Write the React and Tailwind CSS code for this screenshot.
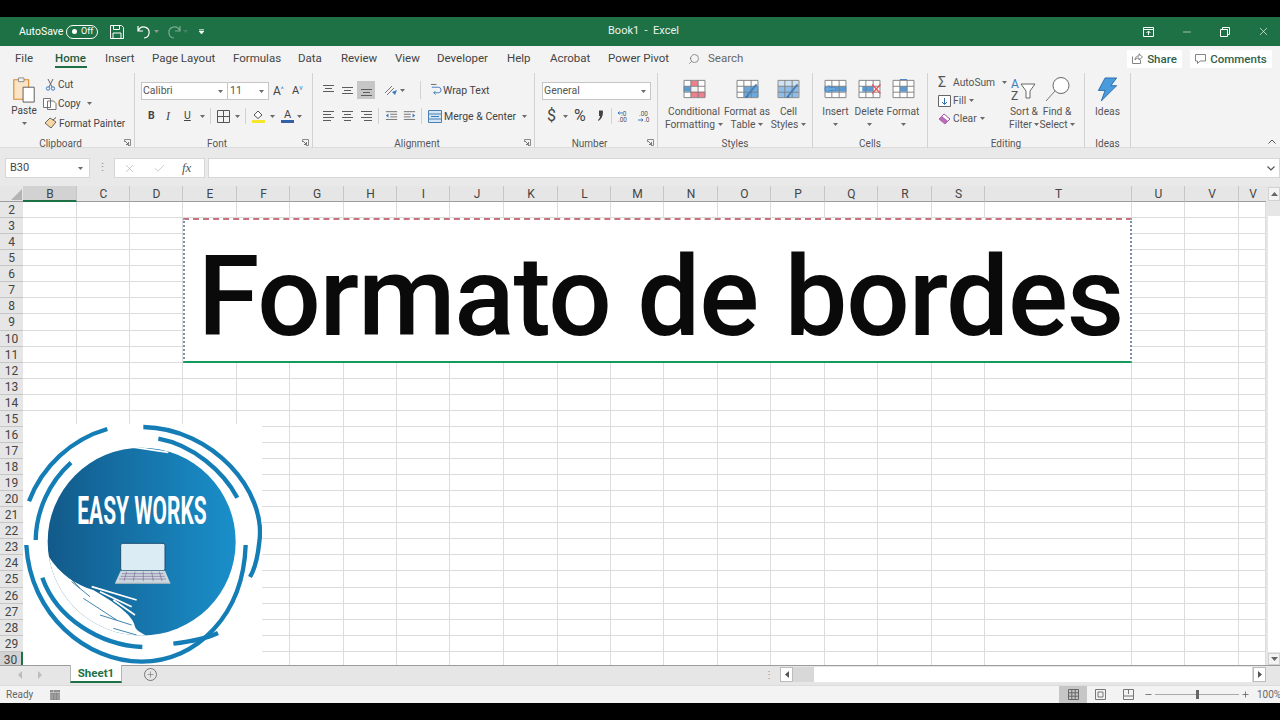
import React from "react";
import { Search, Minus, Plus, X, Check } from "lucide-react";

const FONT = "font-['Roboto',sans-serif]";

const TABS = [
  { label: "File", w: "w-[40px]" },
  { label: "Home", w: "w-[50px]", active: true },
  { label: "Insert", w: "w-[47px]" },
  { label: "Page Layout", w: "w-[81px]" },
  { label: "Formulas", w: "w-[65px]" },
  { label: "Data", w: "w-[43px]" },
  { label: "Review", w: "w-[54px]" },
  { label: "View", w: "w-[42px]" },
  { label: "Developer", w: "w-[70px]" },
  { label: "Help", w: "w-[43px]" },
  { label: "Acrobat", w: "w-[58px]" },
  { label: "Power Pivot", w: "w-[80px]" },
];

const COLUMNS = ["B", "C", "D", "E", "F", "G", "H", "I", "J", "K", "L", "M", "N", "O", "P", "Q", "R", "S", "T", "U", "V", "V"];

const ROWS = Array.from({ length: 29 }, (_, i) => i + 2);

function Caret({ className = "" }) {
  return (
    <svg width="5" height="3" viewBox="0 0 5 3" className={`shrink-0 ${className}`}>
      <path d="M0 0h5L2.500 3z" fill="#6a6a6a" />
    </svg>
  );
}

function Launcher() {
  return (
    <svg width="7" height="7" viewBox="0 0 7 7" className="absolute right-[3px] bottom-[2px]">
      <path d="M.5 3V.5H6.500V6.500H4" fill="none" stroke="#8a8a8a" />
      <path d="M1 2l3.500 3.500M2 5.500h2.500V3" fill="none" stroke="#777" />
    </svg>
  );
}

function Lines({ rows, active }) {
  return (
    <div className={`w-[18px] h-[18px] flex items-center justify-center ${active ? "bg-[#c6c6c6]" : ""}`}>
      <svg width="13" height="14" viewBox="0 0 13 14">
        {rows.map(([x1, x2, y], i) => (
          <path key={i} d={`M${x1} ${y + 0.5}H${x2}`} stroke="#5c5c5c" />
        ))}
      </svg>
    </div>
  );
}

function GridCell({ fills = [], children }) {
  return (
    <svg width="25" height="20" viewBox="0 0 26 22">
      <rect x="1.500" y="1.500" width="23" height="19" fill="#fff" />
      {fills.map(([x, y, w, h, c], i) => <rect key={i} x={x} y={y} width={w} height={h} fill={c} />)}
      <path d="M1.500 1.500h23v19h-23zM9 1.500v19M17 1.500v19M1.500 8h23M1.500 14.500h23" fill="none" stroke="#7c7c7c" />
      {children}
    </svg>
  );
}

function BigButton({ icon, lines, w }) {
  return (
    <div className={`${w} flex flex-col items-center leading-[13px] text-center`}>
      <div className="h-[22px] flex items-center justify-center">{icon}</div>
      <div className="mt-[5px] whitespace-nowrap">{lines[0]}</div>
      <div className="h-[13px] flex items-center justify-center gap-[3px] whitespace-nowrap">
        {lines[1]}
        <Caret />
      </div>
    </div>
  );
}

function Group({ label, w, launcher, children }) {
  return (
    <div className={`${w} relative h-[75px] shrink-0 flex flex-col border-r border-[#d2d2d2]`}>
      <div className="h-[64px]">{children}</div>
      <div className={`h-[11px] leading-[13px] text-center text-[10px] text-[#555] ${launcher ? "pr-[13px]" : ""}`}>{label}</div>
      {launcher && <Launcher />}
    </div>
  );
}

function TitleBar() {
  return (
    <div className="h-[29px] bg-[#1e7145] flex items-center text-white text-[11px] relative">
      <span className="ml-[19px] w-[47px] text-[10.500px]">AutoSave</span>
      <div className="w-[32px] h-[14px] rounded-full border border-white flex items-center pl-[5px] gap-[4px] text-[9px]">
        <span className="w-[5px] h-[5px] rounded-full bg-white" />
        <span>Off</span>
      </div>
      <svg width="14" height="14" viewBox="0 0 14 14" className="ml-[12px]">
        <path d="M.5.500h11l2 2v11H.5z M3.500.500v4h6v-4 M3 13.500V8h8v5.500" fill="none" stroke="#fff" />
      </svg>
      <svg width="15" height="14" viewBox="0 0 15 14" className="ml-[13px]">
        <path d="M1 1v5h5 M1.500 5.500A5.500 5.500 0 1 1 7 13" fill="none" stroke="#fff" strokeWidth="1.200" />
      </svg>
      <Caret className="ml-[2px] invert" />
      <svg width="15" height="14" viewBox="0 0 15 14" className="ml-[7px] opacity-40">
        <path d="M14 1v5H9 M13.500 5.500A5.500 5.500 0 1 0 8 13" fill="none" stroke="#fff" strokeWidth="1.200" />
      </svg>
      <Caret className="ml-[2px] invert opacity-40" />
      <svg width="5" height="5" viewBox="0 0 5 5" className="ml-[11px]">
        <path d="M0 .5h5M0 2h5L2.500 5z" stroke="#fff" strokeWidth=".6" fill="#fff" />
      </svg>
      <span className="absolute left-[608px] text-[#eaf3ee]">Book1&nbsp; -&nbsp; Excel</span>
      <div className="ml-auto flex items-center text-white">
        <svg width="11" height="10" viewBox="0 0 11 10">
          <path d="M.5.500h10v9H.5zM.5 2.500h10M5.500 8V4M3.500 6l2-2 2 2" fill="none" stroke="#fff" />
        </svg>
        <Minus size={12} strokeWidth={1.200} className="ml-[27px]" />
        <svg width="10" height="10" viewBox="0 0 10 10" className="ml-[27px]">
          <path d="M.5 2.500h7v7h-7zM2.500 2.500v-2h7v7h-2" fill="none" stroke="#fff" />
        </svg>
        <X size={13} strokeWidth={1.200} className="ml-[27px] mr-[10px]" />
      </div>
    </div>
  );
}

function TabsRow() {
  return (
    <div className="h-[25px] bg-[#f3f3f3] flex items-center text-[11.500px] text-[#444] pl-[15px]">
      {TABS.map(t => (
        <div key={t.label} className={`${t.w} h-[25px] leading-[25px] relative ${t.active ? "text-[#1e5c3d] font-medium" : ""}`}>
          {t.label}
          {t.active && <span className="absolute left-0 top-[20px] w-[32px] h-[2px] bg-[#1e7145]" />}
        </div>
      ))}
      <Search size={12} strokeWidth={1.200} className="-scale-x-100 text-[#555]" />
      <span className="ml-[8px] leading-[25px] text-[#666]">Search</span>
      <div className="ml-auto flex items-center gap-[8px] pr-[8px]">
        <div className="w-[55px] h-[18px] bg-white flex items-center justify-center gap-[4px] leading-[18px] text-[#2f5f49] font-medium">
          <svg width="11" height="11" viewBox="0 0 11 11">
            <path d="M.5 3.500v7h8V7M3 7c0-3 2-4 4-4V.8L10.500 4 7 7V5C5.500 5 4 5.500 3 7z" fill="none" stroke="#666" strokeWidth=".8" />
          </svg>
          Share
        </div>
        <div className="w-[82px] h-[18px] bg-white flex items-center justify-center gap-[4px] leading-[18px] text-[#2f5f49] font-medium">
          <svg width="11" height="10" viewBox="0 0 11 10">
            <path d="M.5.500h10v6.500H5L2.500 9.500V7h-2z" fill="none" stroke="#666" strokeWidth=".8" />
          </svg>
          Comments
        </div>
      </div>
    </div>
  );
}

function Clipboard() {
  return (
    <div className="flex h-full text-[10px] text-[#444]">
      <div className="w-[45px] flex flex-col items-center pt-[4px] pl-[3px]">
        <svg width="26" height="26" viewBox="0 0 26 28">
          <path d="M2 3h16v21H2z" fill="#fbe3c6" stroke="#d98a2b" strokeWidth="1.200" />
          <path d="M7 1h6v4H7z" fill="#f3f3f3" stroke="#888" />
          <path d="M12 11h12v16H12z" fill="#fff" stroke="#555" />
        </svg>
        <div className="mt-[1px] leading-[13px]">Paste</div>
        <Caret className="mt-[5px]" />
      </div>
      <div className="flex flex-col gap-[6px] pt-[5px] leading-[13px]">
        <div className="flex items-center gap-[2px]">
          <svg width="11" height="13" viewBox="0 0 11 13">
            <path d="M3 1l4 8M8 1L4 9" stroke="#666" fill="none" />
            <circle cx="3" cy="10.500" r="1.700" fill="none" stroke="#3a7bc0" />
            <circle cx="8" cy="10.500" r="1.700" fill="none" stroke="#3a7bc0" />
          </svg>
          Cut
        </div>
        <div className="flex items-center">
          <svg width="15" height="12" viewBox="0 0 15 12" className="-ml-[2px]">
            <path d="M.5.500h7v9h-7zM4.500 3h6l2.500 2.500v6h-8.500z" fill="#fff" stroke="#666" strokeWidth=".9" />
          </svg>
          <span>Copy</span>
          <Caret className="ml-[6px]" />
        </div>
        <div className="flex items-center gap-[1px] whitespace-nowrap -ml-[1px] mt-[1px]">
          <svg width="14" height="13" viewBox="0 0 14 13">
            <path d="M1 6l5-5 6 4-5 6z" fill="#f7d8a4" stroke="#555" strokeWidth=".9" />
            <path d="M9 3l3-2.500" stroke="#555" />
          </svg>
          Format Painter
        </div>
      </div>
    </div>
  );
}

function Font() {
  return (
    <div className="pl-[6px] pt-[9px] text-[10.500px] text-[#444]">
      <div className="flex items-center h-[18px]">
        <div className="w-[87px] h-[18px] bg-white border border-[#c6c6c6] flex items-center justify-between pl-[1px] pr-[4px] text-[#555]">
          Calibri <Caret />
        </div>
        <div className="w-[41px] h-[18px] bg-white border border-l-0 border-[#c6c6c6] flex items-center justify-between pl-[2px] pr-[4px] text-[#555]">
          11 <Caret />
        </div>
        <span className="ml-[4px] w-[14px] text-[12px]">A<sup className="text-[7px] text-[#3a7bc0]">^</sup></span>
        <span className="ml-[5px] w-[13px] text-[11px]">A<sup className="text-[7px] text-[#3a7bc0]">v</sup></span>
      </div>
      <div className="flex items-center h-[18px] mt-[7px]">
        <span className="ml-[7px] w-[18px] font-bold">B</span>
        <span className="w-[18px] italic font-['Liberation_Serif',serif] text-[12px]">I</span>
        <span className="w-[16px] underline">U</span>
        <Caret />
        <span className="ml-[5px] mr-[6px] w-px h-[16px] bg-[#d2d2d2]" />
        <svg width="13" height="13" viewBox="0 0 13 13">
          <path d="M.5.500h12v12H.5zM6.500.500v12M.5 6.500h12" fill="none" stroke="#555" />
        </svg>
        <Caret className="ml-[5px]" />
        <span className="ml-[5px] mr-[6px] w-px h-[16px] bg-[#d2d2d2]" />
        <svg width="13" height="14" viewBox="0 0 13 14">
          <path d="M2 6l4-4 4 4-4 3.500z" fill="#fff" stroke="#555" />
          <rect x="0" y="11" width="13" height="3" fill="#f5e62b" />
        </svg>
        <Caret className="ml-[5px]" />
        <div className="ml-[6px] w-[13px] flex flex-col items-center leading-[10px] text-[11px]">
          A<span className="w-[13px] h-[3px] bg-[#3360a8]" />
        </div>
        <Caret className="ml-[3px]" />
      </div>
    </div>
  );
}

function Alignment() {
  return (
    <div className="pl-[6px] pt-[8px] text-[10.500px] text-[#444]">
      <div className="flex items-center h-[18px]">
        <Lines rows={[[1, 12, 2], [3, 10, 5], [1, 12, 8]]} />
        <span className="w-px" />
        <Lines rows={[[1, 12, 4], [3, 10, 7], [1, 12, 10]]} />
        <span className="w-px" />
        <Lines active rows={[[1, 12, 6], [3, 10, 9], [1, 12, 12]]} />
        <svg width="16" height="14" viewBox="0 0 16 14" className="ml-[8px]">
          <path d="M2 10l7-7M4 12l7-7" stroke="#777" />
          <path d="M9 9l5-2-2 5" fill="#3a7bc0" />
        </svg>
        <Caret className="ml-[1px]" />
        <span className="ml-[15px] mr-[9px] w-px h-[18px] bg-[#d2d2d2]" />
        <svg width="12" height="14" viewBox="0 0 13 14">
          <path d="M2 4h7a2 2 0 0 1 0 6H4M6 8l-2 2 2 2" fill="none" stroke="#3a7bc0" />
          <path d="M1 1h6" stroke="#666" />
        </svg>
        <span className="ml-[1px] pt-[1px]">Wrap Text</span>
      </div>
      <div className="flex items-center h-[18px] mt-[8px]">
        <Lines rows={[[1, 12, 2], [1, 9, 5], [1, 12, 8], [1, 9, 11]]} />
        <span className="w-px" />
        <Lines rows={[[1, 12, 2], [3, 10, 5], [1, 12, 8], [3, 10, 11]]} />
        <span className="w-px" />
        <Lines rows={[[1, 12, 2], [4, 12, 5], [1, 12, 8], [4, 12, 11]]} />
        <span className="ml-[3px] mr-[6px] w-px h-[16px] bg-[#d2d2d2]" />
        <svg width="13" height="12" viewBox="0 0 15 12">
          <path d="M1 1h13M6 4h8M6 7h8M1 10h13" stroke="#666" />
          <path d="M4 3L1 5.500 4 8z" fill="#3a7bc0" />
        </svg>
        <svg width="13" height="12" viewBox="0 0 15 12" className="ml-[5px]">
          <path d="M1 1h13M1 4h8M1 7h8M1 10h13" stroke="#666" />
          <path d="M11 3l3 2.500L11 8z" fill="#3a7bc0" />
        </svg>
        <span className="ml-[5px] mr-[6px] w-px h-[16px] bg-[#d2d2d2]" />
        <svg width="14" height="13" viewBox="0 0 14 13">
          <path d="M.5.500h13v12H.5zM.5 4h13M.5 9h13" fill="#d5e6f5" stroke="#4a7fb5" />
          <path d="M3 6.500h8" stroke="#3a7bc0" />
        </svg>
        <span className="ml-[2px] pt-[1px] whitespace-nowrap">Merge &amp; Center</span>
        <Caret className="ml-[6px]" />
      </div>
    </div>
  );
}

function NumberGroup() {
  return (
    <div className="pl-[7px] pt-[9px] text-[#444]">
      <div className="w-[109px] h-[18px] bg-white border border-[#c6c6c6] flex items-center justify-between pl-[1px] pr-[4px] text-[10.500px] text-[#555]">
        General <Caret />
      </div>
      <div className="flex items-center h-[20px] mt-[6px] text-[16px]">
        <span className="ml-[5px] w-[16px]">$</span>
        <Caret />
        <span className="ml-[6px] w-[20px]">%</span>
        <svg width="15" height="12" viewBox="0 0 15 12" className="ml-[2px]">
          <path d="M3 .5h3.500a2 2 0 0 1 .5 1.500C7 6 5.500 9 2.500 11L2 10c1.500-1.300 2-2.500 2-4H3z" fill="#444" />
        </svg>
        <span className="mr-[5px] w-px h-[16px] bg-[#d2d2d2]" />
        <svg width="14" height="13" viewBox="0 0 14 13">
          <text x="4" y="5.500" fontSize="6.500" fill="#555" fontFamily="Roboto">.0</text>
          <text x="1" y="12" fontSize="6.500" fill="#555" fontFamily="Roboto">.00</text>
          <path d="M6 3H1M2.500 1.500L1 3l1.500 1.500" stroke="#3a7bc0" fill="none" />
        </svg>
        <svg width="14" height="13" viewBox="0 0 14 13" className="ml-[6px]">
          <text x="2" y="5.500" fontSize="6.500" fill="#555" fontFamily="Roboto">.00</text>
          <text x="7" y="12" fontSize="6.500" fill="#555" fontFamily="Roboto">.0</text>
          <path d="M1 10h5M4.500 8.500L6 10l-1.500 1.500" stroke="#3a7bc0" fill="none" />
        </svg>
      </div>
    </div>
  );
}

function Styles() {
  return (
    <div className="flex pl-[7px] pt-[5px] text-[10.250px] text-[#555]">
      <BigButton w="w-[58px]" lines={["Conditional", "Formatting"]} icon={
        <GridCell fills={[[9, 2, 8, 6, "#ee7f8c"], [9, 8, 8, 6, "#f3f3f3"], [1, 8, 8, 6, "#5b9bd5"], [9, 14, 16, 6, "#ee7f8c"]]} />
      } />
      <BigButton w="w-[48px]" lines={["Format as", "Table"]} icon={
        <GridCell fills={[[9, 8, 16, 12, "#6aa9e0"]]}>
          <path d="M23 6L13 18" stroke="#4a7fb5" strokeWidth="2" />
          <path d="M13 17l-3 4 4-1z" fill="#2f6fb0" />
        </GridCell>
      } />
      <BigButton w="w-[35px]" lines={["Cell", "Styles"]} icon={
        <GridCell fills={[[2, 2, 22, 6, "#cfe2f3"], [2, 8, 22, 12, "#8dbde8"]]}>
          <path d="M23 6L13 18" stroke="#4a7fb5" strokeWidth="2" />
          <path d="M13 17l-3 4 4-1z" fill="#2f6fb0" />
        </GridCell>
      } />
    </div>
  );
}

function Cells() {
  const stack = (label, icon, w) => (
    <div className={`${w} flex flex-col items-center leading-[13px]`}>
      <div className="h-[22px] flex items-center">{icon}</div>
      <div className="mt-[5px]">{label}</div>
      <div className="h-[13px] flex items-center"><Caret /></div>
    </div>
  );
  return (
    <div className="flex pl-[6px] pt-[5px] text-[10.250px] text-[#555]">
      {stack("Insert", (
        <GridCell fills={[[1, 8, 24, 6, "#5b9bd5"]]}>
          <path d="M1 11l5-4v2.500h7v3H6V15z" fill="#6aa9e0" stroke="#3a7bc0" strokeWidth=".5" />
        </GridCell>
      ), "w-[33px]")}
      {stack("Delete", (
        <GridCell fills={[[5, 8, 12, 6, "#5b9bd5"]]}>
          <path d="M16 6l9 10M25 6l-9 10" stroke="#e35a5a" strokeWidth="1.500" />
        </GridCell>
      ), "w-[34px]")}
      {stack("Format", (
        <GridCell fills={[[9, 8, 8, 6, "#5b9bd5"]]}>
          <path d="M9 .5h8" stroke="#3a7bc0" />
        </GridCell>
      ), "w-[34px]")}
    </div>
  );
}

function Editing() {
  return (
    <div className="flex pl-[10px] pt-[3px] text-[10.250px] text-[#555]">
      <div className="w-[70px] flex flex-col gap-[5px] leading-[13px]">
        <div className="flex items-center">
          <span className="w-[15px] text-[14px] leading-[13px] text-[#555]">Σ</span>
          <span>AutoSum</span>
          <Caret className="ml-[7px]" />
        </div>
        <div className="flex items-center">
          <svg width="13" height="12" viewBox="0 0 13 12" className="mr-[2px]">
            <path d="M.5.500h12v11H.5z" fill="#fff" stroke="#666" />
            <path d="M6.500 3v6M4 7l2.500 2.500L9 7" stroke="#2f6fb0" fill="none" />
          </svg>
          <span>Fill</span>
          <Caret className="ml-[3px]" />
        </div>
        <div className="flex items-center">
          <svg width="13" height="12" viewBox="0 0 13 12" className="mr-[2px]">
            <path d="M1 6l5-5 6 5-5 5z" fill="#fff" stroke="#a0569f" />
            <path d="M1 6l3-3 6 5-3 3z" fill="#b96cb8" />
          </svg>
          <span>Clear</span>
          <Caret className="ml-[3px]" />
        </div>
      </div>
      <div className="w-[32px] flex flex-col items-center leading-[13px] pt-[1px]">
        <svg width="26" height="25" viewBox="0 0 26 25" className="shrink-0">
          <text x="0" y="11" fontSize="12" fill="#3a7bc0" fontFamily="Roboto">A</text>
          <text x="0" y="23" fontSize="12" fill="#555" fontFamily="Roboto">Z</text>
          <path d="M10 7h14l-5 7v7h-4v-7z" fill="#fff" stroke="#666" />
        </svg>
        <div className="mt-[3px] whitespace-nowrap">Sort &amp;</div>
        <div className="h-[13px] flex items-center gap-[2px] whitespace-nowrap">Filter <Caret /></div>
      </div>
      <div className="w-[34px] flex flex-col items-center leading-[13px]">
        <svg width="26" height="27" viewBox="0 0 26 27" className="shrink-0">
          <circle cx="17" cy="9.500" r="8" fill="#fff" stroke="#666" />
          <path d="M11 15L2 25" stroke="#777" />
        </svg>
        <div className="mt-[2px] whitespace-nowrap">Find &amp;</div>
        <div className="h-[13px] flex items-center gap-[2px] whitespace-nowrap">Select <Caret /></div>
      </div>
    </div>
  );
}

function Ideas() {
  return (
    <div className="flex flex-col items-center pt-[4px] text-[10.250px] text-[#555] leading-[13px]">
      <svg width="21" height="25" viewBox="0 0 21 26">
        <path d="M8 1h12l-6 8h6L4 25l4-11H1z" fill="#4a9bdc" stroke="#2f6fb0" />
      </svg>
      <div className="mt-[3px]">Ideas</div>
    </div>
  );
}

function Ribbon() {
  return (
    <div className="h-[77px] bg-[#f3f3f3] flex pt-[2px] relative border-b border-[#dcdcdc]">
      <Group label="Clipboard" w="w-[135px]" launcher><Clipboard /></Group>
      <Group label="Font" w="w-[178px]" launcher><Font /></Group>
      <Group label="Alignment" w="w-[222px]" launcher><Alignment /></Group>
      <Group label="Number" w="w-[123px]" launcher><NumberGroup /></Group>
      <Group label="Styles" w="w-[155px]"><Styles /></Group>
      <Group label="Cells" w="w-[115px]"><Cells /></Group>
      <Group label="Editing" w="w-[157px]"><Editing /></Group>
      <Group label="Ideas" w="w-[46px]"><Ideas /></Group>
      <svg width="8" height="5" viewBox="0 0 8 5" className="absolute right-[4px] bottom-[3px]">
        <path d="M.5 4.500L4 1l3.500 3.500" fill="none" stroke="#555" />
      </svg>
    </div>
  );
}

function FormulaBar() {
  return (
    <div className="h-[38px] bg-[#e9e9e9] flex items-start pt-[10px] text-[11px] text-[#444]">
      <div className="ml-[5px] w-[85px] h-[20px] bg-white border border-[#d6d6d6] flex items-center justify-between pl-[4px] pr-[6px]">
        B30 <Caret />
      </div>
      <div className="w-[24px] h-[20px] flex items-center justify-center text-[#888] text-[11px]">⋮</div>
      <div className="w-[91px] h-[20px] bg-white border border-[#d6d6d6] flex items-center">
        <X size={13} strokeWidth={1.200} className="ml-[8px] text-[#b0b0b0]" />
        <Check size={13} strokeWidth={1.200} className="ml-[17px] text-[#b0b0b0]" />
        <span className="ml-[16px] italic font-['Liberation_Serif',serif] text-[13px] text-[#555]">fx</span>
      </div>
      <div className="ml-[3px] flex-1 h-[20px] bg-white border border-[#d6d6d6] flex items-center justify-end pr-[4px]">
        <svg width="8" height="5" viewBox="0 0 8 5">
          <path d="M.5.500L4 4 7.500.500" fill="none" stroke="#555" strokeWidth="1.200" />
        </svg>
      </div>
    </div>
  );
}

function Logo() {
  return (
    <svg viewBox="69 27 717 726" className="absolute left-[23px] top-[238px] w-[239px] h-[242px] bg-white">
      <defs>
        <linearGradient id="disc" x1="0" x2="1" y1="0" y2="0">
          <stop offset="0" stopColor="#125a8a" />
          <stop offset="1" stopColor="#1a8fca" />
        </linearGradient>
        <clipPath id="discClip">
          <circle cx="425" cy="380" r="282" />
        </clipPath>
      </defs>
      <circle cx="425" cy="380" r="282" fill="url(#disc)" />
      <g clipPath="url(#discClip)">
        {/* brush edge at the lower left */}
        <path d="M143 420C180 480 230 510 280 525C340 560 400 600 405 635C410 650 430 655 450 668L140 720z" fill="#fff" />
        <g stroke="#fff" strokeWidth="5" fill="none">
          <path d="M275 515L410 555M300 530L395 575M340 555L405 600M390 95L505 112" />
        </g>
        <g stroke="#1a6c9f" strokeWidth="2.500" fill="none">
          <path d="M200 478L240 520M215 500L270 545M250 550L350 615M300 600L395 630M340 640L410 660" />
        </g>
      </g>
      <g fill="none" stroke="#147db6" strokeWidth="13">
        <path d="M87 259A356 356 0 0 1 322 42" />
        <path d="M107 375A322 322 0 0 1 213 143" />
        <path d="M430 36C640 40 800 230 778 380C774 420 765 460 750 486" />
        <path d="M475 71C580 90 670 170 712 248" />
        <path d="M79 390C90 600 260 740 425 740C590 740 730 600 737 390" />
        <path d="M127 488C170 610 300 690 427 696" />
        <path d="M520 686C570 680 620 670 654 654" />
      </g>
      <text transform="translate(232 327) scale(.62 1)" fontSize="117" fontWeight="700" fill="#fff" fontFamily="Roboto, sans-serif" textLength="626" lengthAdjust="spacingAndGlyphs">EASY WORKS</text>
      <rect x="362" y="385" width="133" height="82" rx="6" fill="#dcecf5" stroke="#1d4f72" strokeWidth="3" />
      <path d="M362 467H495L511 505H345z" fill="#cdd8de" />
      <path d="M345 503H511V507H345z" fill="#9fb0ba" />
      <path d="M366 476H490M362 484H494M358 492H498M380 470L372 498M405 470L400 498M430 470V498M455 470L460 498M478 470L486 498" stroke="#7b6a9a" strokeWidth="2" />
    </svg>
  );
}

function Sheet() {
  return (
    <div className="flex h-[479px] overflow-hidden">
      <div className="relative grid grid-cols-[23px_54px_53px_53px_54px_53px_54px_53px_53px_54px_54px_53px_53px_54px_53px_54px_53px_54px_53px_147px_53px_54px_27px] grid-rows-[16px] auto-rows-[16.07px] w-[1266px] bg-white border-r border-[#9c9c9c] text-[12px] text-[#444]">
        <div className="bg-[#e6e6e6] border-b border-[#9c9c9c] flex items-end justify-end">
          <span className="w-0 h-0 border-l-[11px] border-b-[11px] border-l-transparent border-b-[#b4b4b4] mr-[1px] mb-[1px]" />
        </div>
        {COLUMNS.map((c, i) => (
          <div
            key={i}
            className={`pl-[1px] leading-[16px] text-center border-b border-r border-r-[#c6c6c6] ${i === 0 ? "bg-[#d2d2d2] border-b-2 border-b-[#1e7145]" : "bg-[#e6e6e6] border-b-[#9c9c9c]"} ${i === 21 ? "overflow-hidden border-r-0" : ""}`}
          >
            {c}
          </div>
        ))}
        <div className="col-start-5 col-end-21 row-start-3 row-end-12 bg-white overflow-hidden flex items-center justify-center pt-[14px] pl-[6px] border-t-2 border-b-2 border-x-2 [border-top-style:dashed] [border-left-style:dotted] [border-right-style:dotted] border-t-[#c4737f] border-b-[#129c5c] border-x-[#7d8ea8]">
          <span className="font-medium text-[112px] leading-none text-[#0a0a0a] tracking-[-1.200px] whitespace-nowrap">Formato de bordes</span>
        </div>
        {ROWS.map(r => (
          <React.Fragment key={r}>
            <div className={`text-center border-b border-[#c6c6c6] ${r === 30 ? "pt-[3px] leading-[10px] bg-[#d2d2d2] border-r-2 border-r-[#1e7145]" : "leading-[16px] bg-[#e6e6e6]"}`}>{r}</div>
            {COLUMNS.map((c, i) => {
              const merged = r >= 3 && r <= 11 && i >= 3 && i <= 18;
              if (merged) return null;
              return <div key={i} className="border-b border-r border-[#dcdcdc]" />;
            })}
          </React.Fragment>
        ))}
        <Logo />
      </div>
      <div className="flex-1 bg-[#e6e6e6] flex flex-col items-end pl-[2px]">
        <div className="w-full h-[14px] bg-[#f3f3f3] border border-[#d2d2d2] flex items-center justify-center mt-px">
          <svg width="7" height="4" viewBox="0 0 7 4"><path d="M3.500 0L7 4H0z" fill="#666" /></svg>
        </div>
        <div className="w-full h-[436px] bg-white mt-[15px]" />
        <div className="w-full h-[12px] bg-[#f3f3f3] border border-[#d2d2d2] flex items-center justify-center mt-[1px]">
          <svg width="7" height="4" viewBox="0 0 7 4"><path d="M0 0h7L3.500 4z" fill="#666" /></svg>
        </div>
      </div>
    </div>
  );
}

function SheetTabs() {
  return (
    <div className="h-[20px] bg-[#e6e6e6] flex items-start border-t border-[#9c9c9c] relative">
      <svg width="26" height="8" viewBox="0 0 26 8" className="ml-[18px] mt-[5px]">
        <path d="M4 0L0 4l4 4zM20 0l4 4-4 4z" fill="#bcbcbc" />
      </svg>
      <div className="ml-[26px] -mt-px w-[52px] h-[18px] bg-white border-x border-b-2 border-x-[#b4b4b4] border-b-[#1e7145] text-center text-[11.500px] leading-[16px] font-bold text-[#1e7145]">
        Sheet1
      </div>
      <div className="ml-[22px] mt-[2px] w-[13px] h-[13px] rounded-full border border-[#777] flex items-center justify-center">
        <Plus size={9} strokeWidth={1.500} className="text-[#666]" />
      </div>
      <span className="ml-[607px] w-[4px] text-[10px] leading-[18px] text-[#999]">⋮</span>
      <div className="ml-[12px] mt-[1px] flex w-[486px] h-[15px] bg-[#d8d8d8]">
        <div className="w-[13px] h-[15px] bg-white border border-[#bcbcbc] flex items-center justify-center">
          <svg width="4" height="7" viewBox="0 0 4 7"><path d="M4 0v7L0 3.500z" fill="#555" /></svg>
        </div>
        <div className="ml-[21px] w-[438px] bg-white" />
        <div className="ml-[1px] w-[13px] h-[15px] bg-white border border-[#bcbcbc] flex items-center justify-center">
          <svg width="4" height="7" viewBox="0 0 4 7"><path d="M0 0v7l4-3.500z" fill="#555" /></svg>
        </div>
      </div>
    </div>
  );
}

function StatusBar() {
  return (
    <div className="h-[18px] bg-[#f3f3f3] flex items-center text-[10px] text-[#666] border-t border-[#dcdcdc]">
      <span className="ml-[6px]">Ready</span>
      <svg width="10" height="10" viewBox="0 0 10 10" className="ml-[17px]">
        <path d="M0 0h3v2H0zM4 0h6v2H4zM.5 3h9v7h-9zM3.500 3v7M6.500 3v7" fill="#777" stroke="#777" strokeWidth=".5" fillOpacity=".7" />
      </svg>
      <div className="ml-auto flex items-center h-full">
        <div className="w-[28px] h-full bg-[#c6c6c6] flex items-center justify-center">
          <svg width="11" height="11" viewBox="0 0 11 11">
            <path d="M.5.500h10v10H.5zM3.800.500v10M7.200.500v10M.5 3.800h10M.5 7.200h10" fill="none" stroke="#666" />
          </svg>
        </div>
        <svg width="11" height="11" viewBox="0 0 11 11" className="ml-[8px]">
          <path d="M.5.500h10v10H.5zM3 3h5v5H3z" fill="none" stroke="#777" />
        </svg>
        <svg width="11" height="11" viewBox="0 0 11 11" className="ml-[17px]">
          <path d="M.5.500h10v10H.5zM.5 7h10M5.500.500V5" fill="none" stroke="#777" />
        </svg>
        <Minus size={9} strokeWidth={2} className="ml-[10px] text-[#555]" />
        <div className="ml-[2px] w-[84px] h-px bg-[#aaa] relative">
          <span className="absolute left-[41px] -top-[4px] w-[3px] h-[9px] bg-[#666]" />
        </div>
        <Plus size={9} strokeWidth={2} className="ml-[2px] text-[#555]" />
        <span className="ml-[7px] mr-[2px] w-[21px]">100%</span>
      </div>
    </div>
  );
}

export default function App() {
  return (
    <div className={`w-[1280px] h-[720px] bg-black pt-[17px] overflow-hidden ${FONT}`}>
      <TitleBar />
      <TabsRow />
      <Ribbon />
      <FormulaBar />
      <Sheet />
      <SheetTabs />
      <StatusBar />
    </div>
  );
}
